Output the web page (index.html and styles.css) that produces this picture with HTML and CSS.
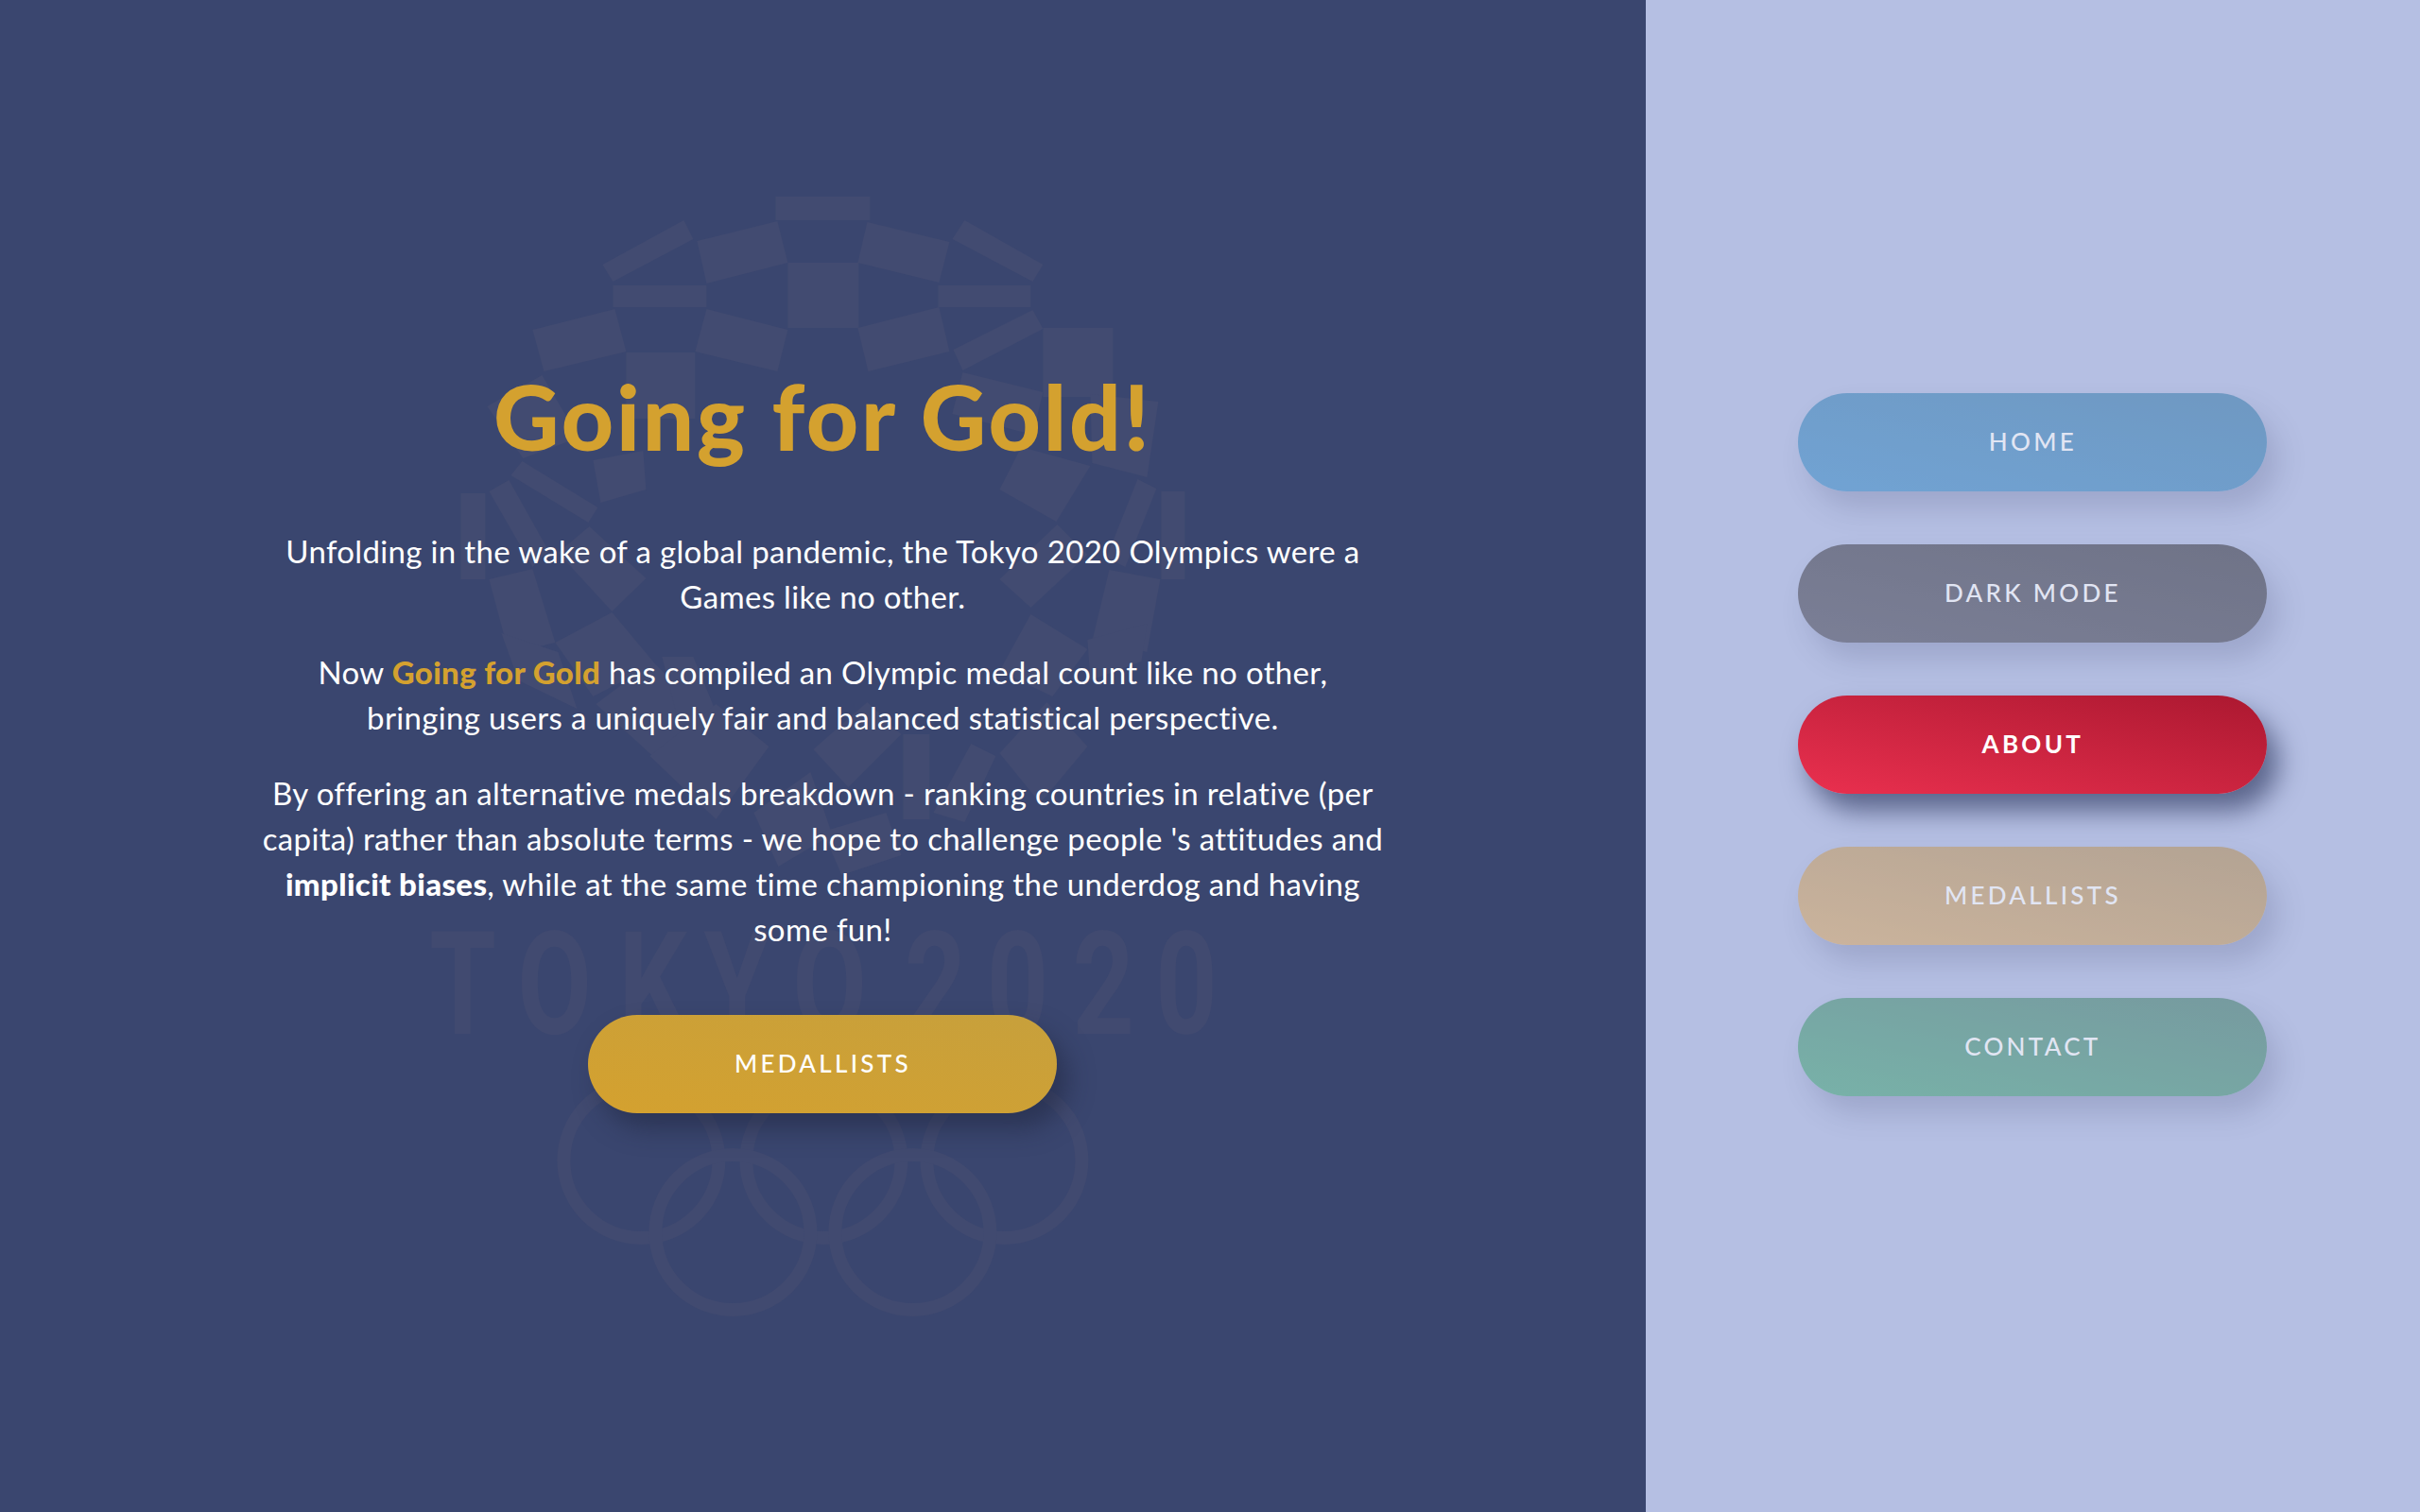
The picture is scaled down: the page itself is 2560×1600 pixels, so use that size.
FILE: index.html
```html
<!DOCTYPE html>
<html lang="en">
<head>
    <meta charset="UTF-8">
    <meta name="viewport" content="width=device-width, initial-scale=1.0">
    <title>Going for Gold!</title>
    <link rel="stylesheet" href="styles.css">
</head>
<body>
    <main class="intro">
        <!-- faint Tokyo 2020 emblem behind the text -->
        <svg class="emblem" viewBox="0 0 1740 1600" aria-hidden="true">
            <g class="emblem-tiles">
                <polygon points="820,208 920,208 920,233 820,233"/>
                <polygon points="723,233 733,253 648,298 637,280"/>
                <polygon points="737,255 822,234 833,278 747,300"/>
                <polygon points="648,302 747,302 747,325 648,325"/>
                <polygon points="833,278 908,278 908,347 833,347"/>
                <polygon points="563,349 650,327 662,372 575,393"/>
                <polygon points="747,327 833,349 822,393 735,372"/>
                <polygon points="662,373 735,373 735,443 662,443"/>
                <polygon points="907,347 993,325 1004,372 918,393"/>
                <polygon points="1008,370 1092,328 1103,348 1018,392"/>
                <polygon points="1020,233 1103,280 1092,298 1007,253"/>
                <polygon points="917,235 1004,256 993,299 907,278"/>
                <polygon points="992,302 1090,302 1090,325 992,325"/>
                <polygon points="1103,347 1177,347 1177,420 1103,420"/>
                <polygon points="1018,394 1103,415 1092,460 1007,438"/>
                <polygon points="1153,417 1225,425 1213,505 1155,490"/>
                <polygon points="1080,473 1153,493 1117,552 1057,518"/>
                <polygon points="1203,507 1223,517 1190,600 1170,590"/>
                <polygon points="1228,520 1253,520 1253,613 1228,613"/>
                <polygon points="1057,613 1118,555 1150,587 1090,643"/>
                <polygon points="1173,603 1227,613 1213,690 1155,678"/>
                <polygon points="1090,650 1150,687 1113,737 1057,710"/>
                <polygon points="515,430 573,397 612,463 553,485"/>
                <polygon points="627,487 680,477 683,518 635,532"/>
                <polygon points="540,503 552,488 632,537 622,553"/>
                <polygon points="487,522 513,522 513,613 487,613"/>
                <polygon points="517,520 538,508 580,583 563,600"/>
                <polygon points="517,613 563,602 587,680 538,692"/>
                <polygon points="590,585 623,557 683,612 647,647"/>
                <polygon points="587,680 647,648 693,703 627,737"/>
                <polygon points="530,670 590,690 610,750 548,720"/>
                <polygon points="630,745 690,700 750,760 690,800"/>
                <polygon points="700,695 733,695 770,785 720,775"/>
                <polygon points="687,800 757,745 813,790 757,867"/>
                <polygon points="797,860 857,817 880,883 823,917"/>
                <polygon points="860,793 917,743 953,777 897,833"/>
                <polygon points="955,777 983,777 983,867 955,867"/>
                <polygon points="987,860 1027,787 1053,800 1020,870"/>
                <polygon points="1057,797 1107,743 1150,790 1100,850"/>
                <polygon points="1150,677 1213,660 1207,700 1153,720"/>
                <polygon points="870,880 937,860 953,905 890,926"/>
            </g>
            <text class="emblem-word" transform="scale(.75 1)" y="1094" x="605 729 872 992 1117 1275 1391 1512 1629">TOKYO2020</text>
            <g class="emblem-rings">
                <circle cx="678" cy="1228" r="82"/>
                <circle cx="871" cy="1228" r="82"/>
                <circle cx="1062" cy="1228" r="82"/>
                <circle cx="775" cy="1304" r="82"/>
                <circle cx="965" cy="1304" r="82"/>
            </g>
        </svg>

        <div class="intro-content">
            <h1>Going for Gold!</h1>
            <p>Unfolding in the wake of a global pandemic, the Tokyo 2020 Olympics were a<br>Games like no other.</p>
            <p>Now <strong class="gold">Going for Gold</strong> has compiled an Olympic medal count like no other,<br>bringing users a uniquely fair and balanced statistical perspective.</p>
            <p>By offering an alternative medals breakdown - ranking countries in relative (per<br>capita) rather than absolute terms - we hope to challenge people 's attitudes and<br><strong>implicit biases</strong>, while at the same time championing the underdog and having<br>some fun!</p>
            <a class="btn btn-gold" href="#">MEDALLISTS</a>
        </div>
    </main>

    <nav class="menu">
        <a class="btn btn-home" href="#">HOME</a>
        <a class="btn btn-dark" href="#">DARK MODE</a>
        <a class="btn btn-about active" href="#">ABOUT</a>
        <a class="btn btn-medal" href="#">MEDALLISTS</a>
        <a class="btn btn-contact" href="#">CONTACT</a>
    </nav>
</body>
</html>
```

FILE: styles.css
```css
* {
    box-sizing: border-box;
}
body {
    margin: 0;
    height: 100vh;
    display: flex;
    overflow: hidden;
    font-family: "Lato", "Open Sans", sans-serif;
    background-color: #b5bfe3;
}
.intro {
    position: relative;
    width: 68%;
    padding-bottom: 24px;
    display: flex;
    justify-content: center;
    align-items: center;
    background-color: #3a466f;
}
.emblem {
    position: absolute;
    top: 0;
    left: 0;
    width: 100%;
    height: 100%;
}
.emblem-tiles {
    fill: #424b71;
}
.emblem-word {
    fill: #414a70;
    font-family: "Roboto", sans-serif;
    font-weight: 700;
    font-size: 152px;
}
.emblem-rings {
    fill: none;
    stroke: #414a70;
    stroke-width: 14;
}
.intro-content {
    position: relative;
    width: 1200px;
    display: flex;
    flex-direction: column;
    align-items: center;
    text-align: center;
    color: #fff;
}
h1 {
    margin: 0 0 77px;
    font-size: 96px;
    line-height: 84px;
    font-weight: 900;
    letter-spacing: 2.8px;
    color: #d4a12f;
}
p {
    margin: 0 0 32px;
    font-size: 33px;
    line-height: 48px;
    letter-spacing: .34px;
    white-space: nowrap;
}
strong {
    font-weight: 900;
}
.gold {
    color: #d4a12f;
}
.btn {
    display: flex;
    justify-content: center;
    align-items: center;
    width: 496px;
    height: 104px;
    padding-bottom: 3px;
    border-radius: 52px;
    font-size: 26px;
    font-weight: 500;
    letter-spacing: 3.3px;
    color: #fff;
    text-decoration: none;
}
.btn-gold {
    margin-top: 35px;
    background: linear-gradient(to top right, #d4a12f, #c7a03c);
    box-shadow: 12px 16px 26px rgba(30, 35, 60, .5);
}
.menu {
    flex: 1;
    padding-bottom: 24px;
    display: flex;
    flex-direction: column;
    justify-content: center;
    align-items: center;
    gap: 56px;
}
.menu .btn {
    opacity: .6;
    box-shadow: 12px 18px 28px rgba(30, 40, 80, .25);
}
.menu .btn.active {
    opacity: 1;
    font-weight: 700;
    box-shadow: 12px 18px 28px rgba(30, 40, 80, .6);
}
.btn-home {
    background: linear-gradient(to top right, #4491ca, #417fac);
}
.btn-dark {
    background: linear-gradient(to top right, #555564, #41414b);
}
.btn-about {
    background: linear-gradient(to top right, #ea304f, #ab1830);
}
.btn-medal {
    background: linear-gradient(to top right, #daad6e, #b2915f);
}
.btn-contact {
    background: linear-gradient(to top right, #50aa82, #4d8273);
}
```
